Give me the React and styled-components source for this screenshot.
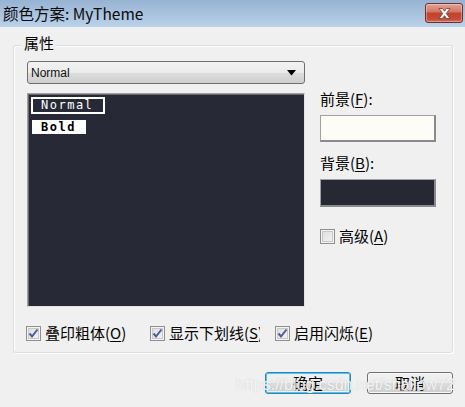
import React from "react";
import styled, { createGlobalStyle } from "styled-components";

const GlobalStyle = createGlobalStyle`
  html, body {
    margin: 0;
    padding: 0;
    background: #f0f0f0;
  }
  body {
    font-family: "Noto Sans CJK SC", "Liberation Sans", sans-serif;
    color: #000;
  }
`;

const Window = styled.div`
  position: relative;
  width: 465px;
  height: 407px;
  background: #f0f0f0;
  display: flex;
  flex-direction: column;
  overflow: hidden;
`;

const TitleBar = styled.div`
  height: 27px;
  flex: none;
  display: flex;
  align-items: flex-start;
  justify-content: space-between;
  padding: 0 2px 0 3px;
  background: linear-gradient(#97b3d2, #bad2ea);
`;

const Title = styled.div`
  font-size: 15.5px;
  line-height: 27px;
  color: #0a0a0a;
`;

const CloseButton = styled.div`
  margin-top: 3px;
  width: 38px;
  height: 20px;
  box-sizing: border-box;
  border: 1px solid #6e2c2c;
  border-radius: 3px;
  background: linear-gradient(#e3a395 0%, #d47360 45%, #c1432c 50%, #c44a33 80%, #d26a52 100%);
  box-shadow: inset 0 0 0 1px rgba(255, 255, 255, 0.35);
  display: flex;
  align-items: center;
  justify-content: center;
`;

const Group = styled.section`
  margin: 18px 0 0 13px;
  width: 440px;
  box-sizing: border-box;
  padding: 0 13px 9px 13px;
  border: 1px solid #d5dfe5;
  border-radius: 3px;
  box-shadow: inset 1px 1px 0 #fff, 1px 1px 0 #fff;
  display: flex;
  flex-direction: column;
`;

const GroupTitle = styled.div`
  align-self: flex-start;
  margin: -12px 0 9px -5px;
  padding: 0 2px;
  background: #f0f0f0;
  font-size: 15px;
  line-height: 18px;
`;

const Columns = styled.div`
  display: grid;
  grid-template-columns: 278px 116px;
  column-gap: 15px;
  row-gap: 9px;
  align-items: start;
`;

const Select = styled.div`
  grid-column: 1;
  height: 23px;
  box-sizing: border-box;
  border: 1px solid #707070;
  border-radius: 3px;
  background: linear-gradient(#f2f2f2 0%, #ebebeb 50%, #dddddd 51%, #cfcfcf 100%);
  display: flex;
  align-items: center;
  justify-content: space-between;
  padding: 0 7px 0 3px;
  font-family: "Liberation Sans", Arial, sans-serif;
  font-size: 12px;
  color: #111;
`;

const ListBox = styled.div`
  grid-column: 1;
  height: 214px;
  box-sizing: border-box;
  background: #272a36;
  border: 1px solid #a0a0a0;
  border-right-color: #e3e3e3;
  border-bottom-color: #e3e3e3;
  box-shadow: inset 1px 1px 0 #696969;
  padding: 3px;
  display: flex;
  flex-direction: column;
  align-items: flex-start;
  gap: 6px;
`;

const Sample = styled.div`
  box-sizing: border-box;
  font-family: "DejaVu Sans Mono", "Liberation Mono", monospace;
  font-size: 12px;
  letter-spacing: 1.5px;
  white-space: nowrap;
  color: ${(p) => (p.$bold ? "#000" : "#fff")};
  background: ${(p) => (p.$bold ? "#fff" : "transparent")};
  font-weight: ${(p) => (p.$bold ? 700 : 400)};
  border: ${(p) => (p.$selected ? "2px solid #fff" : "none")};
  width: ${(p) => p.$w}px;
  height: ${(p) => p.$h}px;
  line-height: ${(p) => (p.$selected ? p.$h - 4 : p.$h)}px;
  padding-left: ${(p) => p.$pad}px;
  margin-left: ${(p) => p.$shift}px;
`;

const SidePanel = styled.div`
  grid-column: 2;
  margin-top: -3px;
  display: flex;
  flex-direction: column;
`;

const FieldLabel = styled.div`
  font-size: 15px;
  line-height: 18px;
  margin-bottom: 7px;
`;

const Mn = styled.span`
  text-decoration: underline;
  text-underline-offset: 2px;
`;

const Swatch = styled.div`
  height: ${(p) => p.$h}px;
  box-sizing: border-box;
  background: ${(p) => p.$color};
  border: 1px solid #a0a0a0;
  border-right: 2px solid #8a8a8a;
  border-bottom: 2px solid #8a8a8a;
  margin-bottom: ${(p) => p.$gap}px;
`;

const CheckRow = styled.div`
  display: grid;
  grid-template-columns: 124px 125px auto;
  margin: 16px 0 0 -1px;
`;

const CheckItem = styled.label`
  display: flex;
  align-items: center;
  gap: 4px;
  font-size: 15px;
  line-height: 20px;
  white-space: nowrap;
  overflow: ${(p) => (p.$clip ? "hidden" : "visible")};
  max-width: ${(p) => (p.$clip ? `${p.$clip}px` : "none")};
`;

const Box = styled.span`
  flex: none;
  width: 15px;
  height: 15px;
  box-sizing: border-box;
  border: 1px solid #8e8f8f;
  background: linear-gradient(135deg, #dcdcdc, #f6f6f6);
  box-shadow: inset 0 0 0 1px #f4f4f4, inset 0 0 0 2px #c8c8c8;
  display: flex;
  align-items: center;
  justify-content: center;
`;

const ButtonRow = styled.div`
  display: flex;
  justify-content: flex-end;
  gap: 16px;
  padding: 19px 12px 0 0;
`;

const Button = styled.div`
  width: 86px;
  height: 22px;
  box-sizing: border-box;
  border: 1px solid ${(p) => (p.$primary ? "#3c7fb1" : "#707070")};
  border-radius: 3px;
  background: linear-gradient(#f2f2f2 0%, #ebebeb 50%, #dddddd 51%, #cfcfcf 100%);
  box-shadow: ${(p) =>
    p.$primary ? "inset 0 0 0 1px #48c6f3, inset 0 0 0 2px #e5f4fc" : "inset 0 0 0 1px #f8f8f8"};
  display: flex;
  align-items: center;
  justify-content: center;
  font-size: 15px;
  line-height: 20px;
`;

const Watermark = styled.div`
  position: absolute;
  left: 236px;
  top: 375px;
  font-family: "Liberation Sans", Arial, sans-serif;
  font-size: 16px;
  line-height: 20px;
  color: rgba(255, 255, 255, 0.85);
  text-shadow: 0 0 1px rgba(170, 170, 170, 0.7);
  pointer-events: none;
  white-space: nowrap;
`;

const Arrow = () => (
  <svg width="10" height="6" viewBox="0 0 10 6">
    <path d="M0 0 H9 L4.5 5.5 Z" fill="#000" />
  </svg>
);

const CloseIcon = () => (
  <svg width="15" height="13" viewBox="0 0 15 13">
    <path
      d="M2 1.5 H5.5 L7.5 4.3 L9.5 1.5 H13 L9.3 6.5 L13 11.5 H9.5 L7.5 8.7 L5.5 11.5 H2 L5.7 6.5 Z"
      fill="#fff"
      stroke="#6a3a36"
      strokeWidth="0.8"
      strokeLinejoin="round"
    />
  </svg>
);

const Tick = () => (
  <svg width="11" height="11" viewBox="0 0 11 11">
    <path d="M1.5 5.5 L4 8.5 L9.5 1.5" fill="none" stroke="#4a5c9c" strokeWidth="2" />
  </svg>
);

const Check = ({ checked, children, clip }) => (
  <CheckItem $clip={clip}>
    <Box>{checked && <Tick />}</Box>
    <span>{children}</span>
  </CheckItem>
);

export default function App() {
  return (
    <Window>
      <GlobalStyle />
      <TitleBar>
        <Title>颜色方案: MyTheme</Title>
        <CloseButton>
          <CloseIcon />
        </CloseButton>
      </TitleBar>

      <Group>
        <GroupTitle>属性</GroupTitle>
        <Columns>
          <Select>
            <span>Normal</span>
            <Arrow />
          </Select>
          <ListBox>
            <Sample $selected $w={74} $h={17} $pad={8} $shift={0}>
              Normal
            </Sample>
            <Sample $bold $w={54} $h={14} $pad={9} $shift={1}>
              Bold
            </Sample>
          </ListBox>
          <SidePanel>
            <FieldLabel>
              前景(<Mn>F</Mn>):
            </FieldLabel>
            <Swatch $color="#fdfdf6" $h={27} $gap={12} />
            <FieldLabel>
              背景(<Mn>B</Mn>):
            </FieldLabel>
            <Swatch $color="#262834" $h={28} $gap={19} />
            <Check>
              高级(<Mn>A</Mn>)
            </Check>
          </SidePanel>
        </Columns>
        <CheckRow>
          <Check checked>
            叠印粗体(<Mn>O</Mn>)
          </Check>
          <Check checked clip={110}>
            显示下划线(<Mn>S</Mn>)
          </Check>
          <Check checked>
            启用闪烁(<Mn>E</Mn>)
          </Check>
        </CheckRow>
      </Group>

      <ButtonRow>
        <Button $primary>确定</Button>
        <Button>取消</Button>
      </ButtonRow>

      <Watermark>https://blog.csdn.net/shallow72</Watermark>
    </Window>
  );
}
